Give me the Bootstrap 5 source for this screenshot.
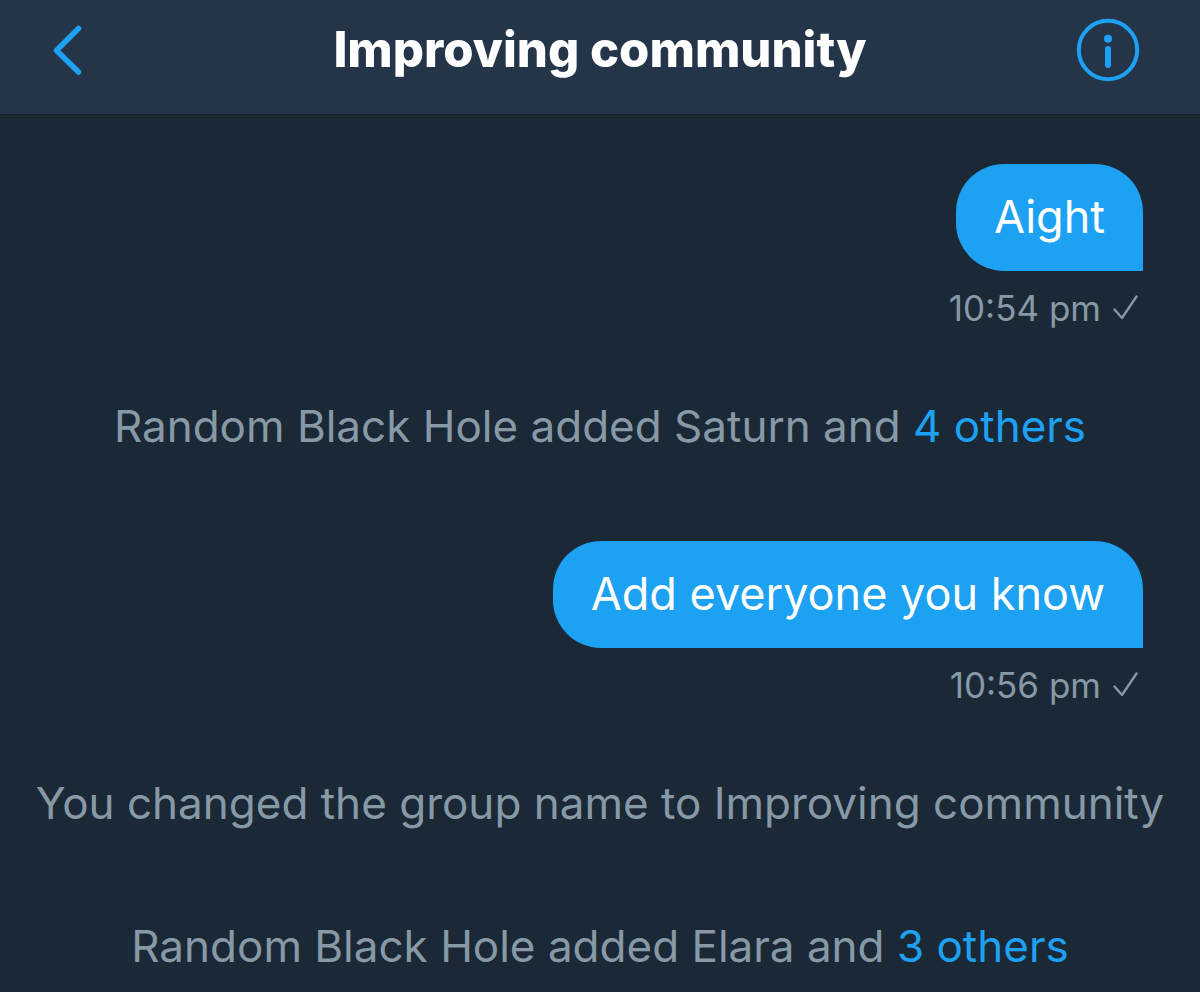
<!DOCTYPE html>
<html lang="en">
<head>
<meta charset="utf-8">
<meta name="viewport" content="width=device-width, initial-scale=1">
<title>Improving community</title>
<link href="https://cdn.jsdelivr.net/npm/bootstrap@5.3.0/dist/css/bootstrap.min.css" rel="stylesheet">
<style>
body { background: #1b2836; color: #8899a6; font-family: Inter, "Liberation Sans", sans-serif; font-size: 44px; line-height: 56px; }
.topbar { background: #243449; padding: 18px 60px 32px 48px; border-bottom: 1px solid #17222d; }
.topbar h1 { font-size: 49px; line-height: 56px; font-weight: 800; color: #fff; }
.icon-btn { color: #1da1f2; }
.icon-btn:hover { color: #1da1f2; }
.back-btn { width: 76px; }
.icon-btn svg { display: block; }
.thread { padding: 49px 0 0; }
.sent { padding: 0 57px; }
.bubble { background: #1da1f2; color: #fff; font-size: 45px; padding: 25px 38px 26px; border-radius: 48px 48px 0 48px; }
.stamp { font-size: 35px; line-height: 40px; margin-top: 17px; gap: 12px; padding-right: 5px; }
.notice { margin: 70px 0 87px; }
.notice a { color: #1da1f2; }
</style>
</head>
<body>
<header class="topbar d-flex align-items-center justify-content-between">
  <button type="button" class="icon-btn back-btn btn p-0 border-0" aria-label="Back">
    <svg width="64" height="64" viewBox="0 0 64 64" fill="none" stroke="currentColor" stroke-width="5.5" stroke-linecap="round" stroke-linejoin="round"><path d="M30.500 10.500 8.500 32.500 30.500 54"/></svg>
  </button>
  <h1 class="m-0 text-center text-nowrap">Improving community</h1>
  <button type="button" class="icon-btn btn p-0 border-0" aria-label="Conversation info">
    <svg width="64" height="64" viewBox="0 0 64 64" fill="none" stroke="currentColor"><circle cx="32" cy="32" r="29.200" stroke-width="4"/><path d="M32 31V47" stroke-width="6" stroke-linecap="round"/><circle cx="32" cy="20.700" r="4" fill="currentColor" stroke="none"/></svg>
  </button>
</header>
<main class="thread">
  <div class="sent d-flex flex-column align-items-end">
    <div class="bubble">Aight</div>
    <div class="stamp d-flex align-items-center"><span>10:54 pm</span>
      <svg width="25" height="26" viewBox="0 0 25 26" fill="none" stroke="currentColor" stroke-width="2.300" stroke-linecap="round" stroke-linejoin="round" role="img" aria-label="Sent"><path d="M1.500 14.500 9 23 23.500 1.500"/></svg></div>
  </div>
  <p class="notice text-center">Random Black Hole added Saturn and <a class="text-decoration-none" href="#">4 others</a></p>
  <div class="sent d-flex flex-column align-items-end">
    <div class="bubble">Add everyone you know</div>
    <div class="stamp d-flex align-items-center"><span>10:56 pm</span>
      <svg width="25" height="26" viewBox="0 0 25 26" fill="none" stroke="currentColor" stroke-width="2.300" stroke-linecap="round" stroke-linejoin="round" role="img" aria-label="Sent"><path d="M1.500 14.500 9 23 23.500 1.500"/></svg></div>
  </div>
  <p class="notice text-center">You changed the group name to Improving community</p>
  <p class="notice text-center mb-0">Random Black Hole added Elara and <a class="text-decoration-none" href="#">3 others</a></p>
</main>
<script src="https://cdn.jsdelivr.net/npm/bootstrap@5.3.0/dist/js/bootstrap.bundle.min.js"></script>
</body>
</html>
